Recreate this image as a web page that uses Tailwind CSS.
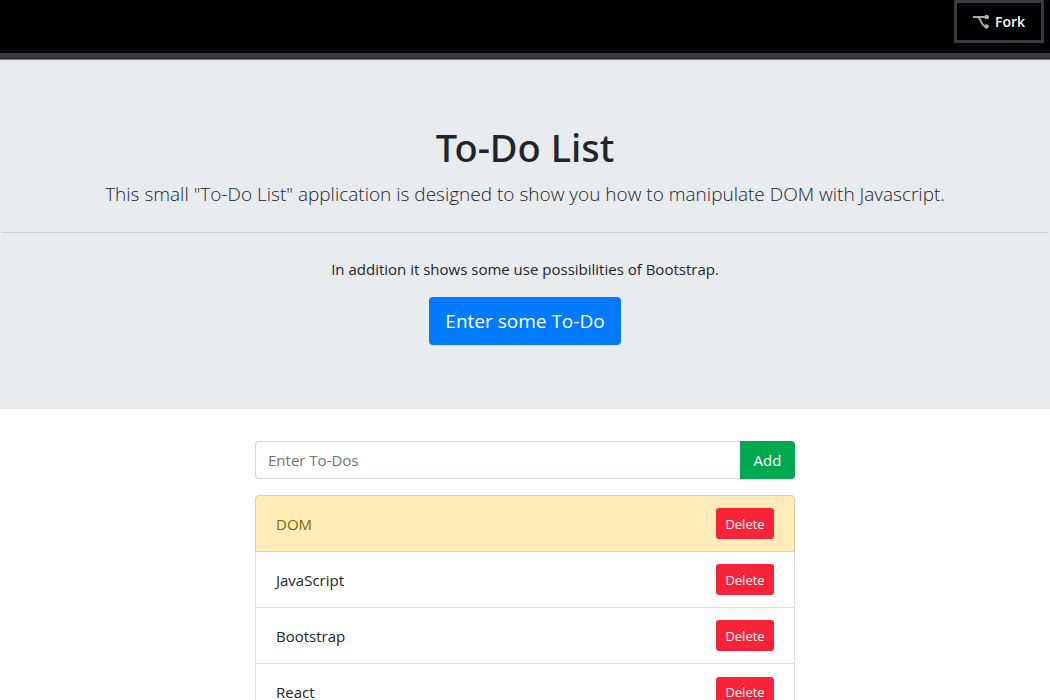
<!DOCTYPE html>
<html lang="en">
<head>
<meta charset="utf-8">
<meta name="viewport" content="width=device-width, initial-scale=1">
<title>To-Do List</title>
<script src="https://cdn.jsdelivr.net/npm/@tailwindcss/browser@4"></script>
</head>
<body class="bg-white font-['Open_Sans','Noto_Sans',sans-serif] text-[15px] leading-6 text-[#212529]">
<header class="relative flex h-[58px] items-start justify-end border-b-5 border-[#393b43] bg-black pr-1.5 shadow-[0_1px_0_#28282c,0_2px_0_#85858a,0_3px_0_#d9dbde]">
  <button type="button" class="flex h-[43px] items-center gap-1.5 border-3 border-[#393b43] bg-black px-4 text-sm font-semibold text-white">
    <svg class="h-4 w-4" viewBox="0 0 16 16" fill="none" stroke="#a9a9b3" aria-hidden="true">
      <path d="M0 3h14M4 3c2 0 3 2 4 4.500s3 5 6 5.500" stroke-width="2"/>
      <path d="M12 1h2.500a1.500 1.500 0 0 1 1.500 1.500v1a1.500 1.500 0 0 1-1.500 1.500H12z" fill="#a9a9b3" stroke="none"/>
      <circle cx="13.500" cy="12.500" r="2.300" fill="#a9a9b3" stroke="none"/>
    </svg>
    <span>Fork</span>
  </button>
</header>
<main>
  <section class="bg-[#e9ecef] px-0.5 py-16 text-center">
    <h1 class="mb-2 font-['Noto_Sans','Open_Sans',sans-serif] text-[38px] leading-[50px] font-medium">To-Do List</h1>
    <p class="text-[19px] leading-7 font-light">This small "To-Do List" application is designed to show you how to manipulate DOM with Javascript.</p>
    <hr class="my-6 border-[#cfd2d5]">
    <p class="mb-4">In addition it shows some use possibilities of Bootstrap.</p>
    <a href="#todo" class="inline-flex h-12 items-center rounded bg-[#007bff] px-4 align-top text-[19px] text-white">Enter some To-Do</a>
  </section>
  <div class="mx-auto max-w-[540px] pt-8">
    <form class="mb-4 flex h-[38px]">
      <input id="todo" type="text" aria-label="Enter To-Dos" placeholder="Enter To-Dos" class="min-w-0 flex-1 rounded-l border border-r-0 border-[#ced4da] px-3 placeholder:text-[#6c757d]">
      <button type="button" class="w-[55px] rounded-r bg-[#00a94f] text-white">Add</button>
    </form>
    <ul class="divide-y divide-[#dfdfdf] rounded border border-[#dfdfdf]">
      <li class="-mx-px -mt-px flex h-[57px] items-center justify-between rounded-t border border-[#dfd09f] bg-[#ffecb9] px-5 text-[#856404]"><span>DOM</span><button type="button" class="h-[31px] w-[58px] rounded-[3px] bg-[#f82338] text-[13px] text-white">Delete</button></li>
      <li class="flex h-14 items-center justify-between px-5"><span>JavaScript</span><button type="button" class="h-[31px] w-[58px] rounded-[3px] bg-[#f82338] text-[13px] text-white">Delete</button></li>
      <li class="flex h-14 items-center justify-between px-5"><span>Bootstrap</span><button type="button" class="h-[31px] w-[58px] rounded-[3px] bg-[#f82338] text-[13px] text-white">Delete</button></li>
      <li class="flex h-14 items-center justify-between px-5"><span>React</span><button type="button" class="h-[31px] w-[58px] rounded-[3px] bg-[#f82338] text-[13px] text-white">Delete</button></li>
    </ul>
  </div>
</main>
</body>
</html>
